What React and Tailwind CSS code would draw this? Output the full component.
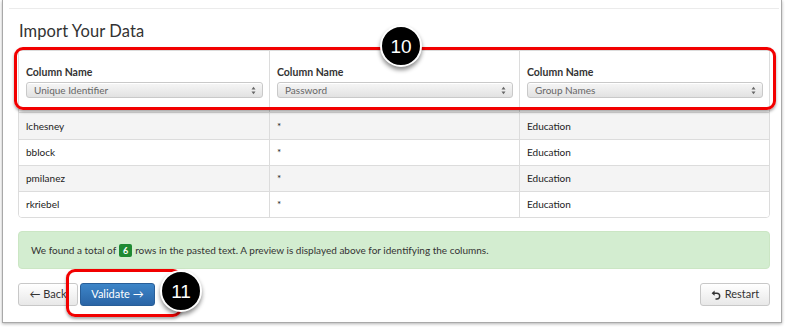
import React from "react";

const columns = ["Unique Identifier", "Password", "Group Names"];

const rows = [
  ["lchesney", "*", "Education"],
  ["bblock", "*", "Education"],
  ["pmilanez", "*", "Education"],
  ["rkriebel", "*", "Education"],
];

function SelectArrows() {
  return (
    <svg width="5" height="9" viewBox="0 0 5 9" className="shrink-0">
      <path d="M0.5 3.5 L2.5 0.8 L4.5 3.5 Z" fill="#666" />
      <path d="M0.5 5.5 L2.5 8.2 L4.5 5.5 Z" fill="#666" />
    </svg>
  );
}

function FakeSelect({ value }) {
  return (
    <div className="flex h-[16px] items-center justify-between rounded-[3px] border border-[#c9c9c9] bg-gradient-to-b from-[#f6f6f6] to-[#e2e2e2] pl-[7px] pr-[6px] shadow-[inset_0_1px_0_#fff]">
      <span className="text-[10px] leading-none text-[#666]">{value}</span>
      <SelectArrows />
    </div>
  );
}

function Callout({ n, className }) {
  return (
    <div
      className={`absolute flex items-center justify-center rounded-full border-[2px] border-white bg-black text-white shadow-[0_3px_4px_rgba(0,0,0,0.45)] ${className}`}
      style={{ fontFamily: '"Liberation Sans", Arial, sans-serif' }}
    >
      <span className="text-[19px] leading-none">{n}</span>
    </div>
  );
}

function RestartIcon() {
  return (
    <svg width="11" height="10" viewBox="0 0 11 10" className="shrink-0">
      <path d="M2.5 3.2 H5.8 A2.9 2.9 0 0 1 5.8 9 H4.5" fill="none" stroke="#333" strokeWidth="1.4" />
      <path d="M0.6 3.2 L3.6 0.6 L3.6 5.8 Z" fill="#333" />
    </svg>
  );
}

export default function App() {
  return (
    <div
      className="relative h-[329px] w-[786px] overflow-hidden bg-white text-[#333]"
      style={{ fontFamily: 'Lato, "Open Sans", sans-serif' }}
    >
      {/* panel */}
      <div className="ml-[2px] h-[323px] w-[780px] border-x border-b border-[#a9a9a9] shadow-[0_1px_3px_rgba(0,0,0,0.3)]">
        <div className="ml-[6px] mr-[2px] pt-[8px]">
          <div className="h-px bg-[#ebebeb]" />
        </div>

        <h1 className="ml-[16px] mt-[13px] h-[19px] text-[16.5px] font-normal leading-[19px] tracking-[0.1px] text-[#333]">
          Import Your Data
        </h1>

        {/* table */}
        <div className="ml-[15px] mt-[9px] w-[752px] overflow-hidden rounded-b-[4px] border border-[#dcdcdc]">
          <div className="grid h-[62px] grid-cols-[250px_250px_1fr] border-b border-[#dcdcdc]">
            {columns.map((c, i) => (
              <div
                key={c}
                className={`pl-[7px] pr-[6px] pt-[15px] ${i > 0 ? "border-l border-[#dcdcdc]" : ""}`}
              >
                <div className="mb-[3px] text-[10.5px] font-bold leading-[13px] text-[#333]">
                  Column Name
                </div>
                <FakeSelect value={c} />
              </div>
            ))}
          </div>
          {rows.map((r, ri) => (
            <div
              key={ri}
              className={`grid h-[26px] grid-cols-[250px_250px_1fr] ${ri > 0 ? "border-t border-[#dcdcdc]" : ""} ${ri % 2 === 0 ? "bg-[#f4f4f4]" : "bg-white"}`}
            >
              {r.map((cell, ci) => (
                <div
                  key={ci}
                  className={`flex items-center pl-[7px] text-[10px] text-[#222] ${ci > 0 ? "border-l border-[#dcdcdc]" : ""}`}
                >
                  {cell}
                </div>
              ))}
            </div>
          ))}
        </div>

        {/* alert */}
        <div className="ml-[15px] mt-[13px] flex h-[38px] w-[752px] items-center rounded-[4px] border border-[#cbe6c4] bg-[#d3edd0] pl-[12px] text-[10px] text-[#333]">
          We found a total of
          <span className="mx-[3px] inline-flex h-[13px] w-[13px] items-center justify-center rounded-[2px] bg-[#1f8a33] text-[9px] font-bold leading-none text-white">
            6
          </span>
          rows in the pasted text. A preview is displayed above for identifying the columns.
        </div>

        {/* buttons */}
        <div className="ml-[15px] mt-[14px] flex w-[752px] items-center">
          <button className="h-[23px] w-[60px] rounded-[3px] border border-[#c8c8c8] bg-gradient-to-b from-white to-[#e8e8e8] text-[11px] text-[#333]">
            ← Back
          </button>
          <button className="ml-[2px] h-[23px] w-[75px] rounded-[3px] border border-[#285e98] bg-gradient-to-b from-[#3d85c8] to-[#2a65a6] text-[11px] text-white">
            Validate →
          </button>
          <button className="ml-auto flex h-[23px] w-[70px] items-center justify-center gap-[3px] rounded-[3px] border border-[#c8c8c8] bg-gradient-to-b from-white to-[#e8e8e8] text-[11px] text-[#333]">
            <RestartIcon />
            Restart
          </button>
        </div>
      </div>

      {/* annotation overlays */}
      <div className="pointer-events-none absolute left-[14px] top-[47px] h-[63px] w-[762px] rounded-[9px] border-[3px] border-[#f20000] shadow-[0_2px_3px_rgba(0,0,0,0.35)]" />
      <Callout n="10" className="left-[380px] top-[25px] h-[42px] w-[42px]" />

      <div className="pointer-events-none absolute left-[66px] top-[269px] h-[48px] w-[116px] rounded-[9px] border-[3px] border-[#f20000] shadow-[0_2px_3px_rgba(0,0,0,0.35)]" />
      <Callout n="11" className="left-[160px] top-[270px] h-[42px] w-[42px]" />
    </div>
  );
}
